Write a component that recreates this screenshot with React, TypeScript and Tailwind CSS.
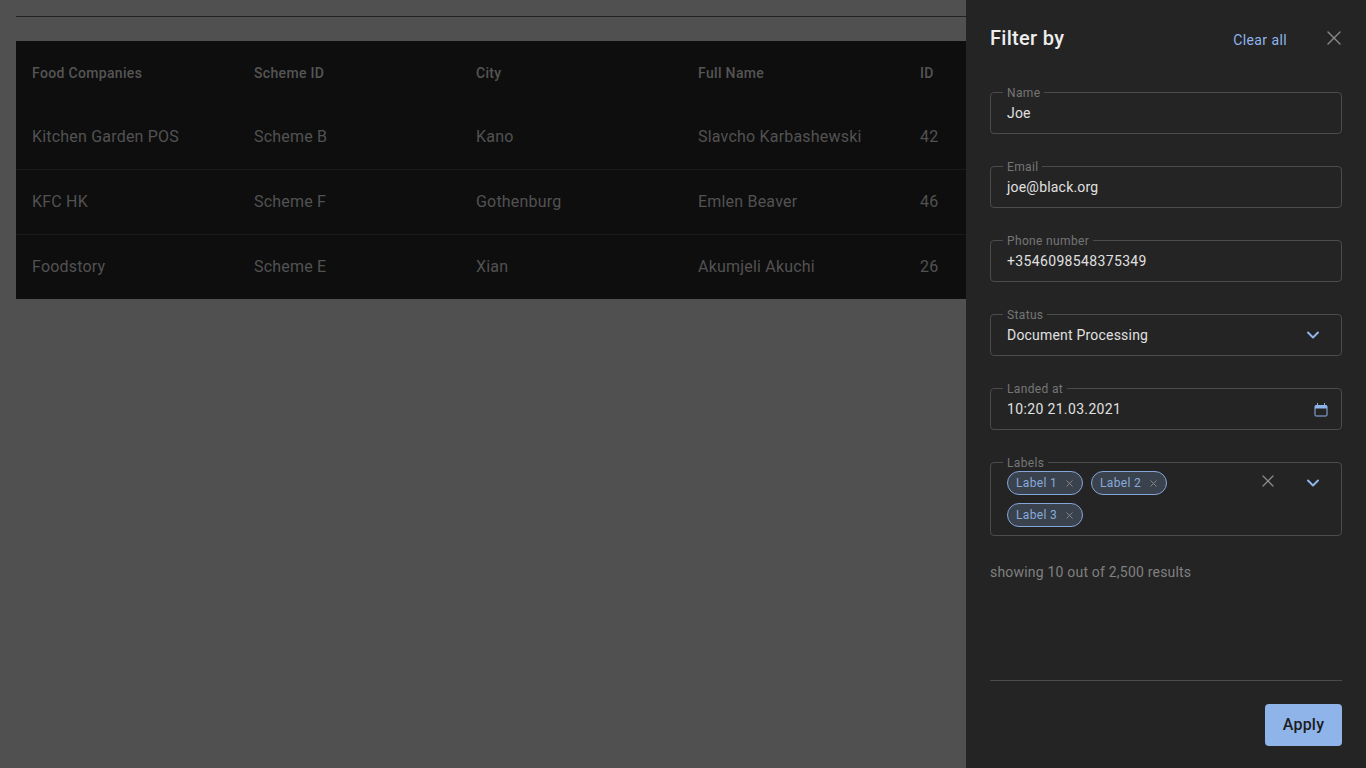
import { X, ChevronDown } from 'lucide-react';

const COLUMNS = ['Food Companies', 'Scheme ID', 'City', 'Full Name', 'ID'];
const ROWS = [
  ['Kitchen Garden POS', 'Scheme B', 'Kano', 'Slavcho Karbashewski', '42'],
  ['KFC HK', 'Scheme F', 'Gothenburg', 'Emlen Beaver', '46'],
  ['Foodstory', 'Scheme E', 'Xian', 'Akumjeli Akuchi', '26'],
];

function CalendarIcon() {
  return (
    <svg width="14" height="15" viewBox="0 0 14 15" fill="none" className="mr-[1px] text-[#8fb4ea]">
      <rect x="1" y="3.5" width="12" height="10.5" rx="1" stroke="currentColor" />
      <rect x="1" y="3.5" width="12" height="3" fill="currentColor" />
      <path d="M3.5 1V4M10.5 1V4" stroke="currentColor" />
    </svg>
  );
}

function Field({ label, children, tall = false }: { label: string; children: React.ReactNode; tall?: boolean }) {
  return (
    <div
      className={`relative rounded border border-[#4b4b4b] pl-4 pr-3 ${
        tall ? 'h-[74px]' : 'flex h-[42px] items-center justify-between'
      }`}
    >
      <span className="absolute -top-[7px] left-3 bg-[#242424] px-1 text-xs leading-[14px] tracking-[0.35px] text-[#767676]">
        {label}
      </span>
      {children}
    </div>
  );
}

function Chip({ label }: { label: string }) {
  return (
    <span className="flex h-6 w-[76px] items-center justify-between rounded-full border border-[#84a6d8] bg-[#3a424e] pl-2 pr-[7px] text-xs tracking-[0.35px] text-[#88aad9]">
      {label}
      <X size={11} className="text-[#8a8a8a]" />
    </span>
  );
}

export default function App() {
  return (
    <div className="relative h-[768px] w-[1366px] overflow-hidden bg-[#505050] font-['Roboto',sans-serif]">
      <div className="px-4 pt-4">
        <div className="h-px bg-[#222222]" />
        <div className="mt-6 bg-[#0e0e0e]">
          <div className="flex h-16 items-center text-sm font-medium tracking-[0.33px] text-[#555555]">
            {COLUMNS.map((c) => (
              <span key={c} className="w-[222px] pl-4">
                {c}
              </span>
            ))}
          </div>
          {ROWS.map((row, i) => (
            <div
              key={row[0]}
              className={`flex items-center text-base tracking-[0.2px] text-[#525252] ${
                i < 2 ? 'h-[65px] border-b border-[#1a1a1a]' : 'h-[64px]'
              }`}
            >
              {row.map((cell) => (
                <span key={cell} className="w-[222px] pl-4">
                  {cell}
                </span>
              ))}
            </div>
          ))}
        </div>
      </div>

      <aside className="absolute inset-y-0 right-0 flex w-[400px] flex-col bg-[#242424] px-6 text-sm tracking-[0.2px] text-[#e0e0e0]">
        <div className="flex h-[76px] items-center">
          <h2 className="text-xl font-medium tracking-[0.3px] text-[#eeeeee]">Filter by</h2>
          <span className="mt-1 ml-auto text-[#8fb4ea] tracking-[0.4px]">Clear all</span>
          <X size={24} strokeWidth={1.4} className="ml-[35px] -mr-[4px] text-[#8a8a8a]" />
        </div>

        <div className="mt-4 flex flex-col gap-8">
          <Field label="Name">
            <span>Joe</span>
          </Field>
          <Field label="Email">
            <span>joe@black.org</span>
          </Field>
          <Field label="Phone number">
            <span className="tracking-[0.35px]">+3546098548375349</span>
          </Field>
          <Field label="Status">
            <span>Document Processing</span>
            <ChevronDown size={20} strokeWidth={2.4} className="mr-[6px] text-[#8fb4ea]" />
          </Field>
          <Field label="Landed at">
            <span className="tracking-[0.35px]">10:20 21.03.2021</span>
            <CalendarIcon />
          </Field>
          <Field label="Labels" tall>
            <div className="flex items-start pt-2">
              <div className="flex w-[176px] flex-wrap gap-x-2 gap-y-2">
                <Chip label="Label 1" />
                <Chip label="Label 2" />
                <Chip label="Label 3" />
              </div>
              <X size={20} strokeWidth={1.5} className="ml-[75px] text-[#8a8a8a]" />
              <ChevronDown size={20} strokeWidth={2.4} className="mt-[2px] ml-[25px] text-[#8fb4ea]" />
            </div>
          </Field>
        </div>

        <p className="mt-[26px] text-[#808080]">showing 10 out of 2,500 results</p>

        <div className="mt-auto border-t border-[#4b4b4b] pt-[23px] pb-[22px]">
          <button className="ml-auto block h-[42px] w-[77px] rounded bg-[#8fb4ea] text-base font-medium text-[#1c1c1c]">
            Apply
          </button>
        </div>
      </aside>
    </div>
  );
}
